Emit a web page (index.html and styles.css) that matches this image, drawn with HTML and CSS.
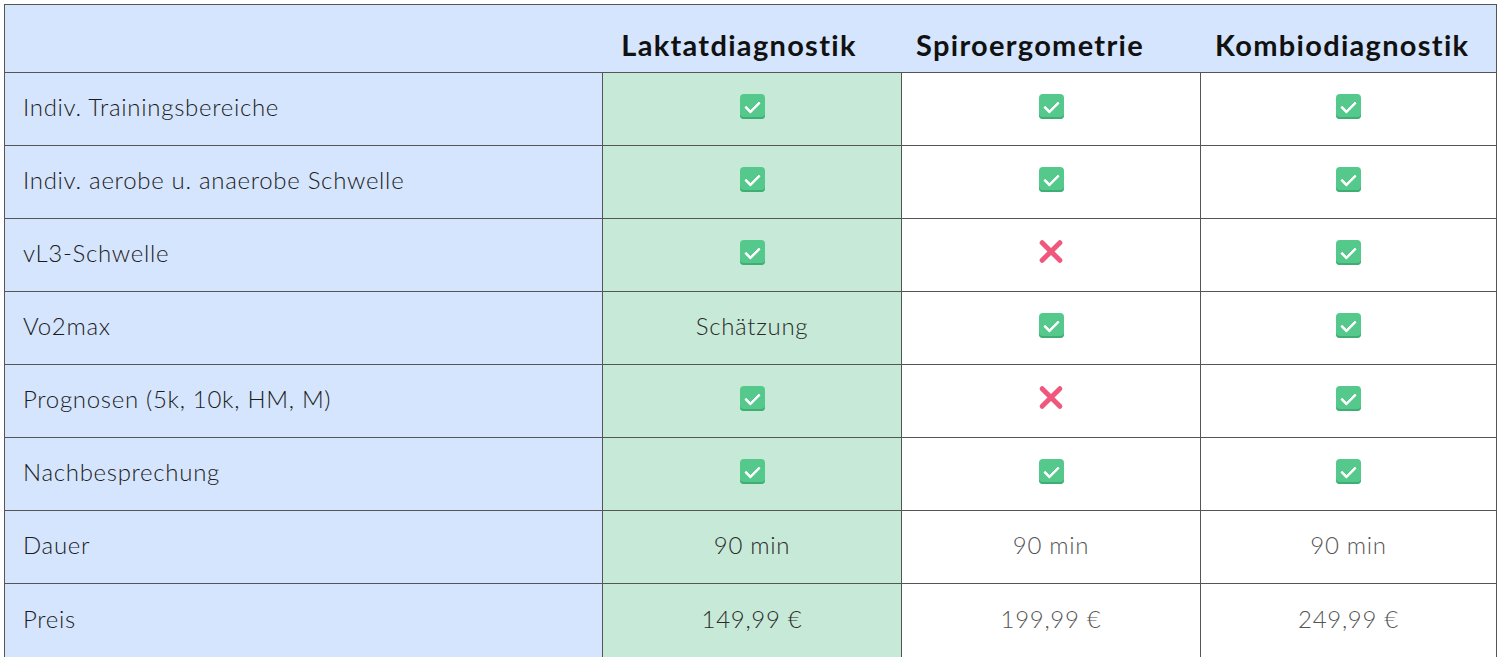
FILE: index.html
```html
<!DOCTYPE html>
<html lang="de">
<head>
<meta charset="utf-8">
<title>Vergleich</title>
<link rel="stylesheet" href="styles.css">
</head>
<body>
<table class="cmp">
  <colgroup>
    <col class="c-label"><col class="c-val"><col class="c-val"><col class="c-last">
  </colgroup>
  <thead>
    <tr>
      <th class="h-empty"></th>
      <th class="h1">Laktatdiagnostik</th>
      <th class="h2">Spiroergometrie</th>
      <th class="h3">Kombiodiagnostik</th>
    </tr>
  </thead>
  <tbody>
    <tr><td class="label">Indiv. Trainingsbereiche</td><td class="hl"><span class="ok"></span></td><td><span class="ok"></span></td><td><span class="ok"></span></td></tr>
    <tr><td class="label">Indiv. aerobe u. anaerobe Schwelle</td><td class="hl"><span class="ok"></span></td><td><span class="ok"></span></td><td><span class="ok"></span></td></tr>
    <tr><td class="label">vL3-Schwelle</td><td class="hl"><span class="ok"></span></td><td><span class="no"></span></td><td><span class="ok"></span></td></tr>
    <tr><td class="label">Vo2max</td><td class="hl">Schätzung</td><td><span class="ok"></span></td><td><span class="ok"></span></td></tr>
    <tr><td class="label">Prognosen (5k, 10k, HM, M)</td><td class="hl"><span class="ok"></span></td><td><span class="no"></span></td><td><span class="ok"></span></td></tr>
    <tr><td class="label">Nachbesprechung</td><td class="hl"><span class="ok"></span></td><td><span class="ok"></span></td><td><span class="ok"></span></td></tr>
    <tr><td class="label">Dauer</td><td class="hl">90 min</td><td>90 min</td><td>90 min</td></tr>
    <tr class="last"><td class="label">Preis</td><td class="hl">149,99 €</td><td>199,99 €</td><td>249,99 €</td></tr>
  </tbody>
</table>
</body>
</html>
```
FILE: styles.css
```css
html, body {
  margin: 0;
  padding: 0;
  background: #ffffff;
}
body {
  padding: 4px 4px 0 4px;
  font-family: "Lato", "Open Sans", sans-serif;
}
.cmp {
  border-collapse: collapse;
  width: 1492px;
  table-layout: fixed;
  border: 1px solid #555;
}
.c-label { width: 598px; }
.c-val { width: 299px; }
.c-last { width: 296px; }

.cmp thead th {
  background: #d5e5fd;
  height: 56px;
  padding: 0 0 11px 0;
  vertical-align: bottom;
  font-family: "Lato", sans-serif;
  font-weight: 700;
  font-size: 29px;
  line-height: 32px;
  color: #111;
  letter-spacing: 1.3px;
  border-bottom: 1px solid #555;
}
.cmp thead th.h1 { padding-right: 26px; }
.cmp thead th.h2 { padding-right: 42px; }
.cmp thead th.h3 { padding-right: 12px; }

.cmp td {
  height: 67px;
  padding: 0 0 5px 0;
  border: 1px solid #555;
  text-align: center;
  vertical-align: middle;
  font-weight: 300;
  font-size: 24px;
  letter-spacing: 0.7px;
  color: #555;
  background: #fff;
}
.cmp tr.last td {
  height: 69px;
}
.cmp td.label {
  text-align: left;
  padding-left: 18px;
  background: #d5e5fd;
  color: #1c1c1c;
}
.cmp td.hl {
  background: #c7e9d8;
  color: #2a2a2a;
}
.ok {
  display: inline-block;
  width: 25px;
  height: 25px;
  border-radius: 4px;
  background: #55c98b;
  box-shadow: inset 0 -2px 0 #3fae74;
  position: relative;
  top: -3px;
  vertical-align: middle;
}
.ok::after {
  content: "";
  position: absolute;
  left: 8px;
  top: 4px;
  width: 6px;
  height: 12px;
  border: solid #fff;
  border-width: 0 3px 3px 0;
  transform: rotate(45deg);
  border-radius: 1px;
}
.no {
  display: inline-block;
  width: 26px;
  height: 26px;
  position: relative;
  top: -3px;
  vertical-align: middle;
}
.no::before, .no::after {
  content: "";
  position: absolute;
  left: -2px;
  top: 10px;
  width: 30px;
  height: 5px;
  border-radius: 3px;
  background: #f0577c;
}
.no::before { transform: rotate(45deg); }
.no::after { transform: rotate(-45deg); }
```
